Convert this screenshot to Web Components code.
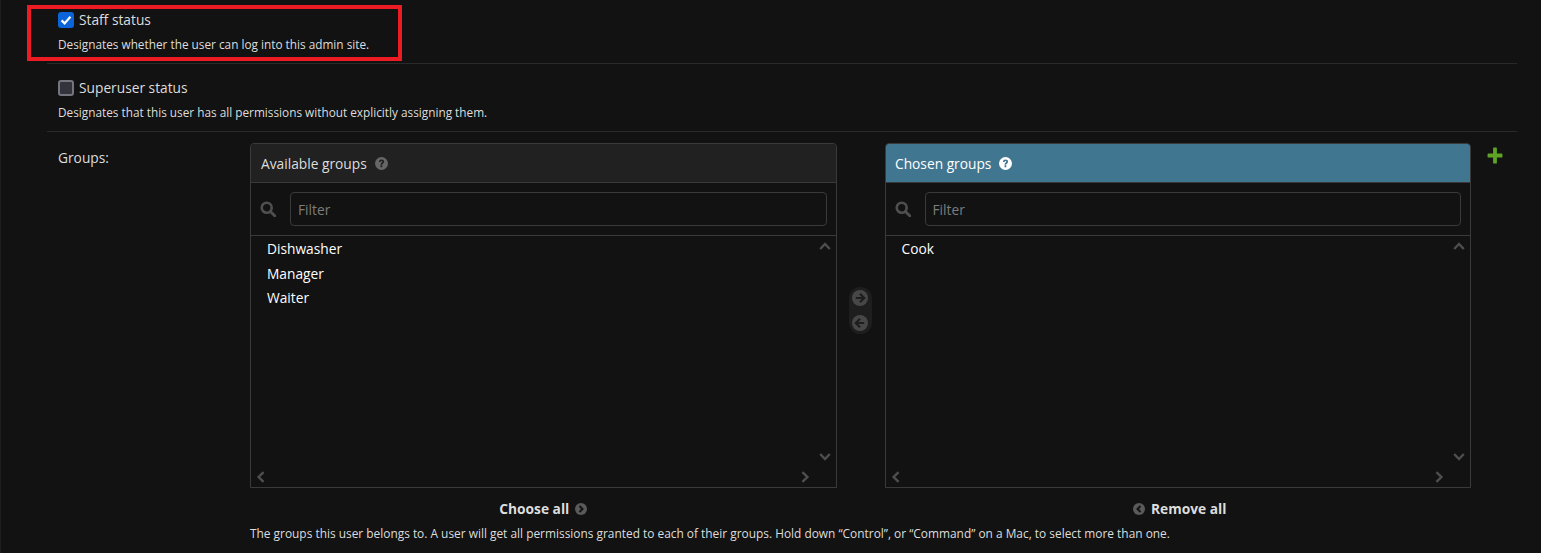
<!DOCTYPE html>
<html lang="en"><head><meta charset="utf-8"><title>User groups</title>
<style>
html,body{margin:0;background:#121212;color:#eee;font-family:"Open Sans","Noto Sans",sans-serif;overflow:hidden}
body{height:553px;border-left:1px solid #1e1e1e;box-sizing:border-box}
</style></head><body>
<template id="t-row"><style>
:host{display:block;margin:0 24px 0 46px;padding:10px 11px;border-bottom:1px solid #2a2a2a}
:host([first]){padding-top:6px}
:host([last]){border-bottom:0;padding-top:11px}
</style><slot></slot></template>

<template id="t-check"><style>
:host{display:block;position:relative}
.l{display:flex;align-items:center;gap:5px;height:29px;font-size:13.75px;color:#ddd;line-height:27px}
.l span.t{display:block;margin-top:-2px}
.b{width:16px;height:16px;margin-top:-2px;box-sizing:border-box;border-radius:3px;border:2px solid #75757f;background:#33333b;display:flex;align-items:center;justify-content:center}
:host([checked]) .b{background:#0b64d8;border:0}
svg{display:none;width:12px;height:12px}
:host([checked]) svg{display:block}
.h{font-size:11.8px;line-height:18px;color:#ddd}
</style><div class="l"><span class="b"><svg viewBox="0 0 12 12"><path d="M1.6 6.4 4.6 9.4 10.4 2.8" fill="none" stroke="#fff" stroke-width="2.2"/></svg></span><span class="t"><slot></slot></span></div><div class="h"><slot name="help"></slot></div></template>

<template id="t-icon"><style>
:host{display:inline-flex;flex:none}
svg{display:block;width:100%;height:100%}
</style><svg viewBox="0 0 16 16"></svg></template>

<template id="t-box"><style>
:host{display:flex;flex-direction:column;min-width:0}
.box{height:345px;box-sizing:border-box;border:1px solid #3a3a3a;border-top-left-radius:4px;border-top-right-radius:4px;display:flex;flex-direction:column;position:relative}
.t{height:39px;box-sizing:border-box;background:#212121;border-bottom:1px solid #3a3a3a;border-radius:3px 3px 0 0;display:flex;align-items:center;gap:8px;padding:0 10px;font-size:13.75px;font-weight:400;color:#ddd;margin:0}
:host([chosen]) .t{background:#417690;color:#fff;padding-left:9.5px}
#q{width:13px;height:13px;color:#666;--q:#212121}
:host([chosen]) #q{color:#fff;--q:#417690}
.f{height:53px;box-sizing:border-box;border-bottom:1px solid #3a3a3a;display:flex;align-items:center;padding:0 9px;gap:14px}
:host([chosen]) .f{padding-left:9.5px;gap:13.5px}
.i{flex:1;height:34px;box-sizing:border-box;border:1px solid #3a3a3a;border-radius:4px;display:flex;align-items:center;padding:0 7px;font-size:13.75px;color:#7c7c7c}
.l{flex:1;padding:1px 16px 0;margin:0;list-style:none;font-size:13.75px;line-height:24.5px;color:#fff}
.u,.d,.a,.z{position:absolute;width:12px;height:12px;color:#4e4e4e}
.u{right:5px;top:96px}.d{right:5px;top:307px}.a{left:4px;top:327px}.z{right:25px;top:327px}
.act{height:41px;display:flex;align-items:center;justify-content:center;gap:6px;font-size:13.75px;font-weight:700;color:#ddd}
:host([chosen]) .act{padding-left:4px}
</style><div class="box"><h2 class="t"><slot name="title"></slot><ui-icon name="help" id="q"></ui-icon></h2>
<div class="f"><ui-icon name="search" style="width:16px;height:16px;color:#4f4f4f"></ui-icon><div class="i">Filter</div></div>
<ul class="l"><slot></slot></ul>
<ui-icon class="u" name="up"></ui-icon><ui-icon class="d" name="down"></ui-icon><ui-icon class="a" name="left"></ui-icon><ui-icon class="z" name="right"></ui-icon></div>
<div class="act"><slot name="action"></slot></div></template>

<template id="t-sel"><style>
:host{display:grid;grid-template-columns:192px 586.5px 48px 586.5px auto;align-items:start;font-size:13.75px}
.lb{color:#ddd;line-height:29px}
.mv{align-self:start;margin:144px 0 0 12px;width:23px;height:47px;border-radius:12px;background:#1e1e1e;display:flex;flex-direction:column;align-items:center;justify-content:center;gap:9px}
.add{margin:4px 0 0 14.5px;width:18px;height:17px;color:#5fa225}
.help{grid-column:2/6;font-size:11.9px;line-height:19px;color:#ddd;margin-top:-5px}
</style><div class="lb"><slot name="label"></slot></div><slot name="a"></slot>
<div class="mv"><ui-icon name="cright" style="width:16px;height:16px"></ui-icon><ui-icon name="cleft" style="width:16px;height:16px"></ui-icon></div>
<slot name="b"></slot><ui-icon class="add" name="plus"></ui-icon><div class="help"><slot name="help"></slot></div></template>

<template id="t-item"><style>:host{display:block}</style><slot></slot></template>

<script>
const P={
help:'<circle cx="8" cy="8" r="8" fill="currentColor"/><path d="M4.9 6.1c.1-2 1.4-3 3.2-3s3.1 1.1 3.1 2.6c0 2.2-2.3 2.2-2.3 3.9H6.8c0-2.6 2.2-2.7 2.2-3.8 0-.6-.4-1-1-1s-1.1.5-1.2 1.3zM6.8 10.3h2.2v2.3H6.8z" fill="var(--q,#121212)"/>',
search:'<circle cx="6.7" cy="6.7" r="5" fill="none" stroke="currentColor" stroke-width="2.6"/><path d="M10.4 10.4 15 15" stroke="currentColor" stroke-width="2.8" stroke-linecap="round"/>',
up:'<path d="M1.2 9 6 4l4.8 5" fill="none" stroke="currentColor" stroke-width="2.4"/>',
down:'<path d="M1.2 3 6 8l4.8-5" fill="none" stroke="currentColor" stroke-width="2.4"/>',
left:'<path d="M8.6 1.2 3.6 6l5 4.8" fill="none" stroke="currentColor" stroke-width="2.4"/>',
right:'<path d="M3.4 1.2 8.4 6l-5 4.8" fill="none" stroke="currentColor" stroke-width="2.4"/>',
cright:'<circle cx="8" cy="8" r="8" fill="#474747"/><path d="M8 3.8 12.2 8 8 12.2M3.8 8h8" fill="none" stroke="#1e1e1e" stroke-width="2.2"/>',
cleft:'<circle cx="8" cy="8" r="8" fill="#474747"/><path d="M8 3.8 3.8 8 8 12.2M4.2 8h8" fill="none" stroke="#1e1e1e" stroke-width="2.2"/>',
sright:'<circle cx="8" cy="8" r="8" fill="#5a5a5a"/><path d="M6 4 10 8 6 12" fill="none" stroke="#121212" stroke-width="2.6"/>',
sleft:'<circle cx="8" cy="8" r="8" fill="#5a5a5a"/><path d="M10 4 6 8 10 12" fill="none" stroke="#121212" stroke-width="2.6"/>',
plus:'<path d="M6.2 1.2a.8.8 0 0 1 .8-.8h2a.8.8 0 0 1 .8.8v4.9h4.4a.8.8 0 0 1 .8.8v2.2a.8.8 0 0 1-.8.8H9.8v4.9a.8.8 0 0 1-.8.8H7a.8.8 0 0 1-.8-.8V9.9H1.8a.8.8 0 0 1-.8-.8V6.9a.8.8 0 0 1 .8-.8h4.4z" fill="currentColor"/>'
};
function shadow(el,id){el.attachShadow({mode:'open'}).appendChild(document.getElementById(id).content.cloneNode(true));return el.shadowRoot}
class UiIcon extends HTMLElement{constructor(){super();shadow(this,'t-icon')}
 connectedCallback(){const n=this.getAttribute('name');const s=this.shadowRoot.querySelector('svg');
  if(['up','down','left','right'].includes(n))s.setAttribute('viewBox','0 0 12 12');s.innerHTML=P[n]}}
customElements.define('ui-icon',UiIcon);
class AdminRow extends HTMLElement{constructor(){super();shadow(this,'t-row')}}
customElements.define('admin-row',AdminRow);
class CheckField extends HTMLElement{constructor(){super();shadow(this,'t-check')}}
customElements.define('check-field',CheckField);
class SelectorBox extends HTMLElement{constructor(){super();shadow(this,'t-box')}}
customElements.define('selector-box',SelectorBox);
class GroupSelector extends HTMLElement{constructor(){super();shadow(this,'t-sel')}}
customElements.define('group-selector',GroupSelector);
class SelItem extends HTMLElement{constructor(){super();shadow(this,'t-item')}}
customElements.define('sel-item',SelItem);
class RedMark extends HTMLElement{constructor(){super();this.attachShadow({mode:'open'}).innerHTML='<style>:host{display:block;position:absolute;left:27px;top:5px;width:375px;height:56px;box-sizing:border-box;border:4px solid #ed1c24;pointer-events:none}</style>'}}
customElements.define('red-mark',RedMark);
</script>

<admin-row first><check-field checked>Staff status<span slot="help">Designates whether the user can log into this admin site.</span></check-field></admin-row>
<admin-row><check-field>Superuser status<span slot="help">Designates that this user has all permissions without explicitly assigning them.</span></check-field></admin-row>
<admin-row last>
<group-selector>
<span slot="label">Groups:</span>
<selector-box slot="a"><span slot="title">Available groups</span><sel-item>Dishwasher</sel-item><sel-item>Manager</sel-item><sel-item>Waiter</sel-item><span slot="action" style="display:contents">Choose all <ui-icon name="sright" style="width:12px;height:12px"></ui-icon></span></selector-box>
<selector-box slot="b" chosen><span slot="title">Chosen groups</span><sel-item>Cook</sel-item><span slot="action" style="display:contents"><ui-icon name="sleft" style="width:12px;height:12px"></ui-icon> Remove all</span></selector-box>
<span slot="help">The groups this user belongs to. A user will get all permissions granted to each of their groups. Hold down “Control”, or “Command” on a Mac, to select more than one.</span>
</group-selector>
</admin-row>
<red-mark></red-mark>
</body></html>
